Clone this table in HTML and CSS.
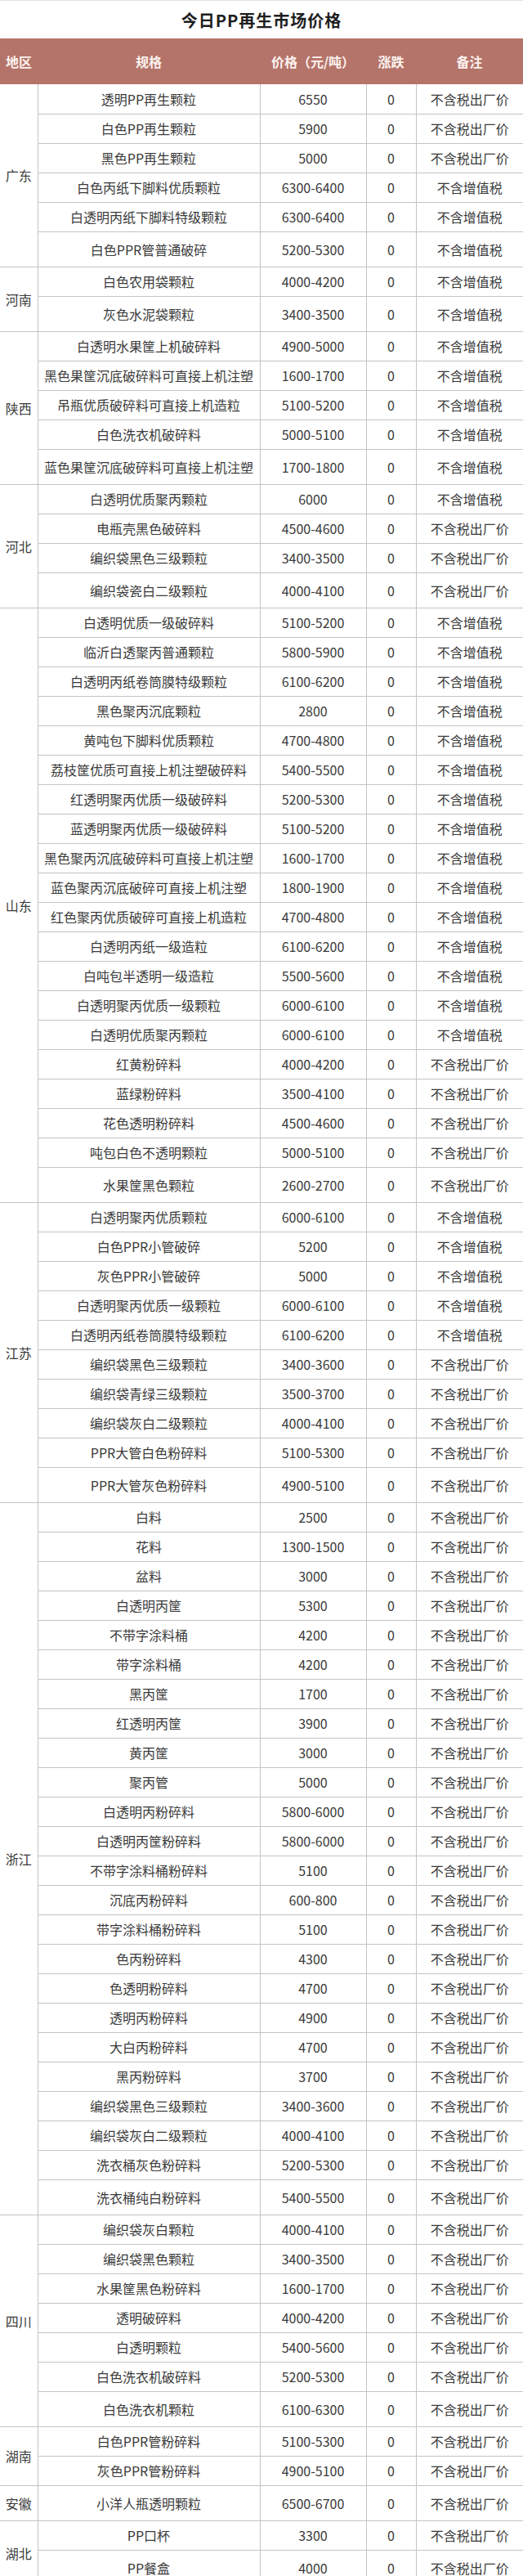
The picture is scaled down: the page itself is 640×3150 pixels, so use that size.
FILE: index.html
```html
<!DOCTYPE html>
<html lang="zh-CN">
<head>
<meta charset="utf-8">
<title>今日PP再生市场价格</title>
<link rel="stylesheet" href="styles.css">
</head>
<body>
<div class="page">
  <h1 class="title">今日PP再生市场价格</h1>
  <table class="price-table">
    <colgroup>
      <col class="c-region"><col class="c-spec"><col class="c-price"><col class="c-change"><col class="c-note">
    </colgroup>
    <thead>
      <tr><th>地区</th><th>规格</th><th>价格（元/吨）</th><th>涨跌</th><th>备注</th></tr>
    </thead>
    <tbody>
      <tr><td class="region" rowspan="6">广东</td><td>透明PP再生颗粒</td><td>6550</td><td>0</td><td>不含税出厂价</td></tr>
      <tr><td>白色PP再生颗粒</td><td>5900</td><td>0</td><td>不含税出厂价</td></tr>
      <tr><td>黑色PP再生颗粒</td><td>5000</td><td>0</td><td>不含税出厂价</td></tr>
      <tr><td>白色丙纸下脚料优质颗粒</td><td>6300-6400</td><td>0</td><td>不含增值税</td></tr>
      <tr><td>白透明丙纸下脚料特级颗粒</td><td>6300-6400</td><td>0</td><td>不含增值税</td></tr>
      <tr class="last"><td>白色PPR管普通破碎</td><td>5200-5300</td><td>0</td><td>不含增值税</td></tr>

      <tr><td class="region" rowspan="2">河南</td><td>白色农用袋颗粒</td><td>4000-4200</td><td>0</td><td>不含增值税</td></tr>
      <tr class="last"><td>灰色水泥袋颗粒</td><td>3400-3500</td><td>0</td><td>不含增值税</td></tr>

      <tr><td class="region" rowspan="5">陕西</td><td>白透明水果筐上机破碎料</td><td>4900-5000</td><td>0</td><td>不含增值税</td></tr>
      <tr><td>黑色果筐沉底破碎料可直接上机注塑</td><td>1600-1700</td><td>0</td><td>不含增值税</td></tr>
      <tr><td>吊瓶优质破碎料可直接上机造粒</td><td>5100-5200</td><td>0</td><td>不含增值税</td></tr>
      <tr><td>白色洗衣机破碎料</td><td>5000-5100</td><td>0</td><td>不含增值税</td></tr>
      <tr class="last"><td>蓝色果筐沉底破碎料可直接上机注塑</td><td>1700-1800</td><td>0</td><td>不含增值税</td></tr>

      <tr><td class="region" rowspan="4">河北</td><td>白透明优质聚丙颗粒</td><td>6000</td><td>0</td><td>不含增值税</td></tr>
      <tr><td>电瓶壳黑色破碎料</td><td>4500-4600</td><td>0</td><td>不含税出厂价</td></tr>
      <tr><td>编织袋黑色三级颗粒</td><td>3400-3500</td><td>0</td><td>不含税出厂价</td></tr>
      <tr class="last"><td>编织袋瓷白二级颗粒</td><td>4000-4100</td><td>0</td><td>不含税出厂价</td></tr>

      <tr><td class="region" rowspan="20">山东</td><td>白透明优质一级破碎料</td><td>5100-5200</td><td>0</td><td>不含增值税</td></tr>
      <tr><td>临沂白透聚丙普通颗粒</td><td>5800-5900</td><td>0</td><td>不含增值税</td></tr>
      <tr><td>白透明丙纸卷筒膜特级颗粒</td><td>6100-6200</td><td>0</td><td>不含增值税</td></tr>
      <tr><td>黑色聚丙沉底颗粒</td><td>2800</td><td>0</td><td>不含增值税</td></tr>
      <tr><td>黄吨包下脚料优质颗粒</td><td>4700-4800</td><td>0</td><td>不含增值税</td></tr>
      <tr><td>荔枝筐优质可直接上机注塑破碎料</td><td>5400-5500</td><td>0</td><td>不含增值税</td></tr>
      <tr><td>红透明聚丙优质一级破碎料</td><td>5200-5300</td><td>0</td><td>不含增值税</td></tr>
      <tr><td>蓝透明聚丙优质一级破碎料</td><td>5100-5200</td><td>0</td><td>不含增值税</td></tr>
      <tr><td>黑色聚丙沉底破碎料可直接上机注塑</td><td>1600-1700</td><td>0</td><td>不含增值税</td></tr>
      <tr><td>蓝色聚丙沉底破碎可直接上机注塑</td><td>1800-1900</td><td>0</td><td>不含增值税</td></tr>
      <tr><td>红色聚丙优质破碎可直接上机造粒</td><td>4700-4800</td><td>0</td><td>不含增值税</td></tr>
      <tr><td>白透明丙纸一级造粒</td><td>6100-6200</td><td>0</td><td>不含增值税</td></tr>
      <tr><td>白吨包半透明一级造粒</td><td>5500-5600</td><td>0</td><td>不含增值税</td></tr>
      <tr><td>白透明聚丙优质一级颗粒</td><td>6000-6100</td><td>0</td><td>不含增值税</td></tr>
      <tr><td>白透明优质聚丙颗粒</td><td>6000-6100</td><td>0</td><td>不含增值税</td></tr>
      <tr><td>红黄粉碎料</td><td>4000-4200</td><td>0</td><td>不含税出厂价</td></tr>
      <tr><td>蓝绿粉碎料</td><td>3500-4100</td><td>0</td><td>不含税出厂价</td></tr>
      <tr><td>花色透明粉碎料</td><td>4500-4600</td><td>0</td><td>不含税出厂价</td></tr>
      <tr><td>吨包白色不透明颗粒</td><td>5000-5100</td><td>0</td><td>不含税出厂价</td></tr>
      <tr class="last"><td>水果筐黑色颗粒</td><td>2600-2700</td><td>0</td><td>不含税出厂价</td></tr>

      <tr><td class="region" rowspan="10">江苏</td><td>白透明聚丙优质颗粒</td><td>6000-6100</td><td>0</td><td>不含增值税</td></tr>
      <tr><td>白色PPR小管破碎</td><td>5200</td><td>0</td><td>不含增值税</td></tr>
      <tr><td>灰色PPR小管破碎</td><td>5000</td><td>0</td><td>不含增值税</td></tr>
      <tr><td>白透明聚丙优质一级颗粒</td><td>6000-6100</td><td>0</td><td>不含增值税</td></tr>
      <tr><td>白透明丙纸卷筒膜特级颗粒</td><td>6100-6200</td><td>0</td><td>不含增值税</td></tr>
      <tr><td>编织袋黑色三级颗粒</td><td>3400-3600</td><td>0</td><td>不含税出厂价</td></tr>
      <tr><td>编织袋青绿三级颗粒</td><td>3500-3700</td><td>0</td><td>不含税出厂价</td></tr>
      <tr><td>编织袋灰白二级颗粒</td><td>4000-4100</td><td>0</td><td>不含税出厂价</td></tr>
      <tr><td>PPR大管白色粉碎料</td><td>5100-5300</td><td>0</td><td>不含税出厂价</td></tr>
      <tr class="last"><td>PPR大管灰色粉碎料</td><td>4900-5100</td><td>0</td><td>不含税出厂价</td></tr>

      <tr><td class="region" rowspan="24">浙江</td><td>白料</td><td>2500</td><td>0</td><td>不含税出厂价</td></tr>
      <tr><td>花料</td><td>1300-1500</td><td>0</td><td>不含税出厂价</td></tr>
      <tr><td>盆料</td><td>3000</td><td>0</td><td>不含税出厂价</td></tr>
      <tr><td>白透明丙筐</td><td>5300</td><td>0</td><td>不含税出厂价</td></tr>
      <tr><td>不带字涂料桶</td><td>4200</td><td>0</td><td>不含税出厂价</td></tr>
      <tr><td>带字涂料桶</td><td>4200</td><td>0</td><td>不含税出厂价</td></tr>
      <tr><td>黑丙筐</td><td>1700</td><td>0</td><td>不含税出厂价</td></tr>
      <tr><td>红透明丙筐</td><td>3900</td><td>0</td><td>不含税出厂价</td></tr>
      <tr><td>黄丙筐</td><td>3000</td><td>0</td><td>不含税出厂价</td></tr>
      <tr><td>聚丙管</td><td>5000</td><td>0</td><td>不含税出厂价</td></tr>
      <tr><td>白透明丙粉碎料</td><td>5800-6000</td><td>0</td><td>不含税出厂价</td></tr>
      <tr><td>白透明丙筐粉碎料</td><td>5800-6000</td><td>0</td><td>不含税出厂价</td></tr>
      <tr><td>不带字涂料桶粉碎料</td><td>5100</td><td>0</td><td>不含税出厂价</td></tr>
      <tr><td>沉底丙粉碎料</td><td>600-800</td><td>0</td><td>不含税出厂价</td></tr>
      <tr><td>带字涂料桶粉碎料</td><td>5100</td><td>0</td><td>不含税出厂价</td></tr>
      <tr><td>色丙粉碎料</td><td>4300</td><td>0</td><td>不含税出厂价</td></tr>
      <tr><td>色透明粉碎料</td><td>4700</td><td>0</td><td>不含税出厂价</td></tr>
      <tr><td>透明丙粉碎料</td><td>4900</td><td>0</td><td>不含税出厂价</td></tr>
      <tr><td>大白丙粉碎料</td><td>4700</td><td>0</td><td>不含税出厂价</td></tr>
      <tr><td>黑丙粉碎料</td><td>3700</td><td>0</td><td>不含税出厂价</td></tr>
      <tr><td>编织袋黑色三级颗粒</td><td>3400-3600</td><td>0</td><td>不含税出厂价</td></tr>
      <tr><td>编织袋灰白二级颗粒</td><td>4000-4100</td><td>0</td><td>不含税出厂价</td></tr>
      <tr><td>洗衣桶灰色粉碎料</td><td>5200-5300</td><td>0</td><td>不含税出厂价</td></tr>
      <tr class="last"><td>洗衣桶纯白粉碎料</td><td>5400-5500</td><td>0</td><td>不含税出厂价</td></tr>

      <tr><td class="region" rowspan="7">四川</td><td>编织袋灰白颗粒</td><td>4000-4100</td><td>0</td><td>不含税出厂价</td></tr>
      <tr><td>编织袋黑色颗粒</td><td>3400-3500</td><td>0</td><td>不含税出厂价</td></tr>
      <tr><td>水果筐黑色粉碎料</td><td>1600-1700</td><td>0</td><td>不含税出厂价</td></tr>
      <tr><td>透明破碎料</td><td>4000-4200</td><td>0</td><td>不含税出厂价</td></tr>
      <tr><td>白透明颗粒</td><td>5400-5600</td><td>0</td><td>不含税出厂价</td></tr>
      <tr><td>白色洗衣机破碎料</td><td>5200-5300</td><td>0</td><td>不含税出厂价</td></tr>
      <tr class="last"><td>白色洗衣机颗粒</td><td>6100-6300</td><td>0</td><td>不含税出厂价</td></tr>

      <tr><td class="region" rowspan="2">湖南</td><td>白色PPR管粉碎料</td><td>5100-5300</td><td>0</td><td>不含税出厂价</td></tr>
      <tr><td>灰色PPR管粉碎料</td><td>4900-5100</td><td>0</td><td>不含税出厂价</td></tr>

      <tr class="last"><td class="region">安徽</td><td>小洋人瓶透明颗粒</td><td>6500-6700</td><td>0</td><td>不含税出厂价</td></tr>

      <tr><td class="region" rowspan="2">湖北</td><td>PP口杯</td><td>3300</td><td>0</td><td>不含税出厂价</td></tr>
      <tr class="last"><td>PP餐盒</td><td>4000</td><td>0</td><td>不含税出厂价</td></tr>
    </tbody>
  </table>
</div>
</body>
</html>
```
FILE: styles.css
```css
html, body {
  margin: 0;
  padding: 0;
  background: #ffffff;
}

.page {
  width: 640px;
  font-family: "Noto Sans CJK SC", "Noto Sans", sans-serif;
  color: #3a3a3a;
  border-top: 1px solid #e2e2e2;
}

.title {
  margin: 0;
  height: 46px;
  display: flex;
  align-items: center;
  justify-content: center;
  font-size: 20px;
  font-weight: 700;
  letter-spacing: 1px;
  color: #1e1e1e;
}

.price-table {
  width: 640px;
  border-collapse: collapse;
  table-layout: fixed;
  font-size: 16px;
}

.c-region { width: 46px; }
.c-spec { width: 272px; }
.c-price { width: 130px; }
.c-change { width: 61px; }
.c-note { width: 131px; }

.price-table thead tr {
  height: 56px;
  background: #b57469;
}

.price-table th {
  color: #fbf2ef;
  font-weight: 700;
  font-size: 16px;
  padding: 0;
  text-align: center;
  white-space: nowrap;
}

.price-table tbody tr {
  height: 36px;
}

.price-table tbody tr.last {
  height: 43px;
}

.price-table td {
  padding: 0;
  text-align: center;
  white-space: nowrap;
  border-bottom: 1px solid #c4c4c4;
  border-left: 1px solid #c4c4c4;
  line-height: 20px;
}

.price-table td.region {
  border-left: none;
  vertical-align: middle;
}
```
